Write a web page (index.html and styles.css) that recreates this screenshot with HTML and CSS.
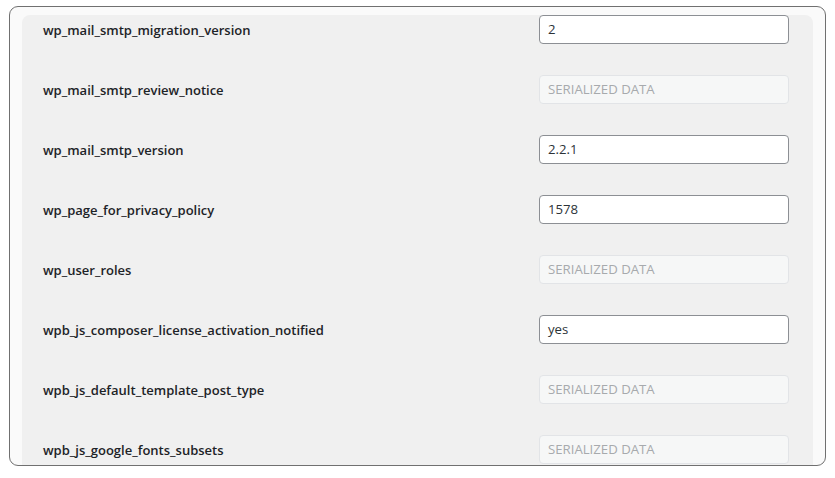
FILE: index.html
```html
<!DOCTYPE html>
<html>
<head>
<meta charset="utf-8">
<link rel="stylesheet" href="styles.css">
</head>
<body>
<div class="frame">
  <div class="panel">
    <div class="list">
      <div class="row"><div class="label">wp_mail_smtp_migration_version</div><div class="field">2</div></div>
      <div class="row"><div class="label">wp_mail_smtp_review_notice</div><div class="field disabled">SERIALIZED DATA</div></div>
      <div class="row"><div class="label">wp_mail_smtp_version</div><div class="field">2.2.1</div></div>
      <div class="row"><div class="label">wp_page_for_privacy_policy</div><div class="field">1578</div></div>
      <div class="row"><div class="label">wp_user_roles</div><div class="field disabled">SERIALIZED DATA</div></div>
      <div class="row"><div class="label">wpb_js_composer_license_activation_notified</div><div class="field">yes</div></div>
      <div class="row"><div class="label">wpb_js_default_template_post_type</div><div class="field disabled">SERIALIZED DATA</div></div>
      <div class="row"><div class="label">wpb_js_google_fonts_subsets</div><div class="field disabled">SERIALIZED DATA</div></div>
    </div>
  </div>
</div>
</body>
</html>
```
FILE: styles.css
```css
html, body {
  margin: 0;
  padding: 0;
  background: #ffffff;
}
body {
  font-family: "Open Sans", "Noto Sans", sans-serif;
  color: #1d2327;
}
.frame {
  margin: 6px 0 0 9px;
  width: 817px;
  height: 460px;
  box-sizing: border-box;
  border: 1px solid #707070;
  border-radius: 9px;
  background: #fafafa;
  overflow: hidden;
  padding: 8px 12px 0 12px;
}
.panel {
  background: #f0f0f0;
  border-radius: 8px 8px 0 0;
  height: 100%;
  overflow: hidden;
}
.list {
  margin-top: -16px;
}
.row {
  height: 60px;
  display: flex;
  align-items: center;
  padding-left: 21px;
}
.label {
  width: 496px;
  padding-top: 2px;
  font-size: 13px;
  font-weight: 600;
  color: #1d2327;
}
.field {
  width: 250px;
  height: 29px;
  box-sizing: border-box;
  border: 1px solid #8c8f94;
  border-radius: 4px;
  background: #ffffff;
  padding: 0 8px;
  font-size: 13.2px;
  line-height: 27px;
  color: #2c3338;
}
.field.disabled {
  background: #f6f7f7;
  border-color: #e2e4e7;
  color: #a7aaad;
}
```
